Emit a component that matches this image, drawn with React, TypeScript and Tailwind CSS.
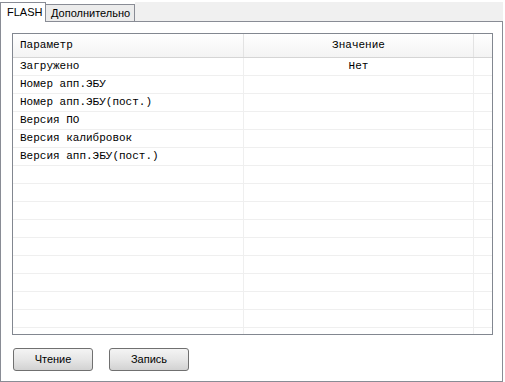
import React from "react"

const rows: [string, string][] = [
  ["Загружено", "Нет"],
  ["Номер апп.ЭБУ", ""],
  ["Номер апп.ЭБУ(пост.)", ""],
  ["Версия ПО", ""],
  ["Версия калибровок", ""],
  ["Версия апп.ЭБУ(пост.)", ""],
]

// pad the grid with empty lines, like the real control does
const allRows: [string, string][] = [...rows, ...Array.from({ length: 10 }, () => ["", ""] as [string, string])]

const mono = { fontFamily: '"Liberation Mono", "Courier New", monospace' }
const sans = { fontFamily: '"Liberation Sans", Arial, sans-serif' }

const Button = ({ label }: { label: string }) => (
  <button
    className="w-[80px] h-[23px] rounded-[3px] border border-[#707070] bg-gradient-to-b from-[#f4f4f4] via-[#e6e6e6] to-[#d2d2d2] text-[11px] text-black"
    style={sans}
  >
    {label}
  </button>
)

export default function App() {
  return (
    <div className="w-[505px] h-[382px] bg-white flex flex-col" style={sans}>
      {/* tab strip */}
      <div className="flex items-end h-[21px] w-[503px]">
        <div className="relative z-10 -mb-px h-[20px] w-[46px] border-l border-t border-r border-[#898c95] bg-white text-[11px] text-black pl-[6px] pt-[3px] leading-[13px]">
          FLASH
        </div>
        <div className="h-[17px] w-[89px] border-t border-r border-[#898c95] bg-[#ececec] text-[11px] text-black pl-[5px] pt-[2px] leading-[13px]">
          Дополнительно
        </div>
        <div className="flex-1 h-[19px] bg-[#f0f0f0]" />
      </div>

      {/* panel */}
      <div className="w-[503px] h-[361px] border border-[#898c95] flex flex-col pl-[11px] pt-[11px]">
        <div className="w-[481px] h-[302px] border border-[#828790] flex flex-col overflow-hidden" style={mono}>
          {/* header */}
          <div className="grid grid-cols-[231px_230px_18px] h-[24px] shrink-0 border-b border-[#d5d5d5] bg-gradient-to-b from-white to-[#f3f3f3] text-[11px] text-black">
            <div className="flex items-center pl-[7px] border-r border-[#e3e3e3]">Параметр</div>
            <div className="flex items-center justify-center border-r border-[#e3e3e3]">Значение</div>
            <div />
          </div>
          {/* body */}
          <div className="flex flex-col">
            {allRows.map(([p, v], i) => (
              <div key={i} className="grid grid-cols-[231px_230px_18px] h-[18px] shrink-0 border-b border-[#efefef] text-[11px] text-black">
                <div className="flex items-center pl-[7px] border-r border-[#efefef] whitespace-pre">{p}</div>
                <div className="flex items-center justify-center border-r border-[#efefef]">{v}</div>
                <div />
              </div>
            ))}
          </div>
        </div>

        <div className="flex gap-[16px] pl-[1px] mt-[13px]">
          <Button label="Чтение" />
          <Button label="Запись" />
        </div>
      </div>
    </div>
  )
}
